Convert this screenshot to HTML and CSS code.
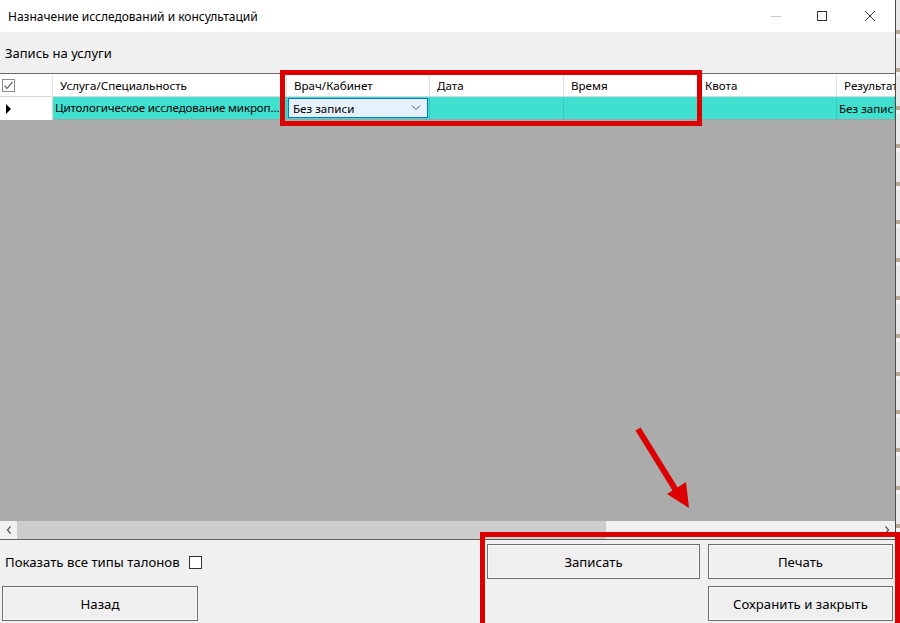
FILE: index.html
```html
<!DOCTYPE html>
<html lang="ru">
<head>
<meta charset="utf-8">
<link rel="stylesheet" href="styles.css">
</head>
<body>
<div class="screen">
  <div class="window">
    <div class="titlebar">
      <div class="title">Назначение исследований и консультаций</div>
      <div class="controls">
        <span class="ctl"><svg width="12" height="12" viewBox="0 0 12 12"><line x1="1" y1="6.5" x2="11" y2="6.5" stroke="#c8c8c8" stroke-width="1"/></svg></span>
        <span class="ctl"><svg width="12" height="12" viewBox="0 0 12 12"><rect x="1.5" y="1.5" width="9" height="9" fill="none" stroke="#333" stroke-width="1"/></svg></span>
        <span class="ctl"><svg width="12" height="12" viewBox="0 0 12 12"><path d="M1 1 L11 11 M11 1 L1 11" stroke="#333" stroke-width="1"/></svg></span>
      </div>
    </div>
    <div class="content">
      <div class="section-label">Запись на услуги</div>
      <div class="grid">
        <div class="row header">
          <div class="cell rowhead"><svg width="13" height="13" viewBox="0 0 13 13"><rect x="0.5" y="0.5" width="12" height="12" fill="#fff" stroke="#8c8c8c"/><path d="M2.5 6.5 L5 9.5 L10.5 3" fill="none" stroke="#6e6e6e" stroke-width="1.2"/></svg></div>
          <div class="cell">Услуга/Специальность</div>
          <div class="cell">Врач/Кабинет</div>
          <div class="cell">Дата</div>
          <div class="cell">Время</div>
          <div class="cell">Квота</div>
          <div class="cell last">Результат</div>
        </div>
        <div class="row data">
          <div class="cell rowhead"><svg width="6" height="10" viewBox="0 0 6 10"><path d="M0 0 L5 5 L0 10 Z" fill="#000"/></svg></div>
          <div class="cell sel ellipsis">Цитологическое исследование микропрепарата шейки матки</div>
          <div class="cell sel combo-cell">
            <div class="combo"><span>Без записи</span><svg width="10" height="6" viewBox="0 0 10 6"><path d="M1 0.5 L5 4.5 L9 0.5" fill="none" stroke="#555" stroke-width="1"/></svg></div>
          </div>
          <div class="cell sel"></div>
          <div class="cell sel"></div>
          <div class="cell sel"></div>
          <div class="cell sel last">Без записи</div>
        </div>
        <div class="filler"></div>
        <div class="hscroll">
          <span class="arrow"><svg width="6" height="8" viewBox="0 0 6 8"><path d="M4.5 0.5 L1.5 4 L4.5 7.5" fill="none" stroke="#606060" stroke-width="1.4"/></svg></span>
          <div class="track"><div class="thumb"></div></div>
          <span class="arrow"><svg width="6" height="8" viewBox="0 0 6 8"><path d="M1.5 0.5 L4.5 4 L1.5 7.5" fill="none" stroke="#606060" stroke-width="1.4"/></svg></span>
        </div>
      </div>
      <div class="footer">
        <div class="left">
          <div class="check-row">Показать все типы талонов <span class="checkbox"></span></div>
          <button class="btn back">Назад</button>
        </div>
        <div class="right">
          <button class="btn">Записать</button>
          <button class="btn">Печать</button>
          <span></span>
          <button class="btn">Сохранить и закрыть</button>
        </div>
      </div>
    </div>
  </div>
  <div class="behind"></div>

  <div class="mark mark-top"></div>
  <div class="mark mark-bottom"></div>
  <svg class="arrow-mark" width="80" height="100" viewBox="0 0 80 100">
    <line x1="5" y1="5" x2="44" y2="68" stroke="#dd0000" stroke-width="6"/>
    <path d="M34 70 L56 84 L53 58 Z" fill="#dd0000"/>
  </svg>
</div>
</body>
</html>
```

FILE: styles.css
```css
* { box-sizing: border-box; }
html, body { margin: 0; padding: 0; }
body {
  width: 900px; height: 623px; overflow: hidden;
  font-family: "Noto Sans", "Open Sans", sans-serif;
  font-size: 12px; color: #000; background: #fff;
}
.screen { position: relative; width: 900px; height: 623px; display: flex; }
.window {
  width: 896px; height: 623px; display: flex; flex-direction: column;
  background: #f0f0f0; border-right: 1px solid #4a4a4a;
}
.behind {
  flex: 1; background: repeating-linear-gradient(#e8e8e8 0 30px, #b8a894 30px 34px, #f4f4f4 34px 38px);
  background-color: #eee;
}
.titlebar {
  height: 32px; background: #fff; display: flex; align-items: center; justify-content: space-between;
}
.title { padding-left: 8px; font-size: 12px; color: #000; }
.controls { display: flex; height: 32px; }
.ctl { width: 46px; height: 32px; display: flex; align-items: center; justify-content: center; }
.ctl:last-child { width: 50px; }
.content { flex: 1; display: flex; flex-direction: column; }
.section-label { height: 41px; padding: 12px 0 0 5px; font-size: 13px; }
.grid {
  height: 466px; display: flex; flex-direction: column; border-top: 1px solid #6b6b6b;
  background: #ababab;
}
.row {
  display: grid;
  grid-template-columns: 53px 234px 143px 134px 134px 139px 1fr;
}
.row.header { height: 23px; background: #fff; border-top: 1px solid #fff; font-size: 11.6px; }
.row.data { height: 23px; font-size: 11.6px; }
.cell {
  display: flex; align-items: center; padding-left: 7px; white-space: nowrap; overflow: hidden;
  border-right: 1px solid #e3e3e3;
}
.header .cell { border-bottom: 1px solid #d8d8d8; }
.cell.last { border-right: none; }
.rowhead { background: #fff; padding-left: 2px; }
.data .rowhead { padding-left: 6px; border-right: 1px solid #d8d8d8; }
.cell.sel { background: #40e0d0; padding-left: 2px; border-right: 1px solid #3cc9bb; border-bottom: 1px solid #a0a0a0; }
.cell.ellipsis { display: block; line-height: 22px; text-overflow: ellipsis; padding-right: 4px; letter-spacing: -0.15px; }
.combo-cell { padding: 1px 1px 1px 1px !important; }
.combo {
  width: 100%; height: 100%; background: #e5f1fb; border: 1px solid #0078d7;
  display: flex; align-items: center; justify-content: space-between; padding: 0 6px 0 4px;
}
.filler { flex: 1; }
.hscroll {
  height: 18px; background: #f0f0f0; display: flex; align-items: center;
}
.hscroll .arrow { width: 17px; height: 18px; display: flex; align-items: center; justify-content: center; }
.track { flex: 1; height: 18px; }
.thumb { width: 589px; height: 18px; background: #cdcdcd; }
.footer {
  flex: 1; border-top: 1px solid #5f5f5f; display: flex; justify-content: space-between;
}
.left { display: flex; flex-direction: column; padding: 12px 0 0 2px; }
.check-row { display: flex; align-items: center; height: 20px; padding-left: 3px; font-size: 13.2px; gap: 9px; }
.checkbox { width: 13px; height: 13px; border: 1px solid #333; background: #fff; display: inline-block; }
.btn {
  font-family: inherit; font-size: 13.2px; color: #000;
  background: #efefef; border: 1px solid #6e6e6e; box-shadow: inset 0 0 0 1px #f8f8f8;
  height: 35px; padding: 0; margin: 0;
}
.back { width: 196px; margin-top: 14px; }
.right {
  display: grid; grid-template-columns: 213px 185px; column-gap: 8px; row-gap: 7px;
  padding: 4px 2px 0 0; align-content: start;
}
.mark { position: absolute; border: 5px solid #dd0000; }
.mark-top { left: 280px; top: 70px; width: 422px; height: 56px; }
.mark-bottom { left: 480px; top: 532px; width: 420px; height: 96px; }
.arrow-mark { position: absolute; left: 633px; top: 424px; }
```
